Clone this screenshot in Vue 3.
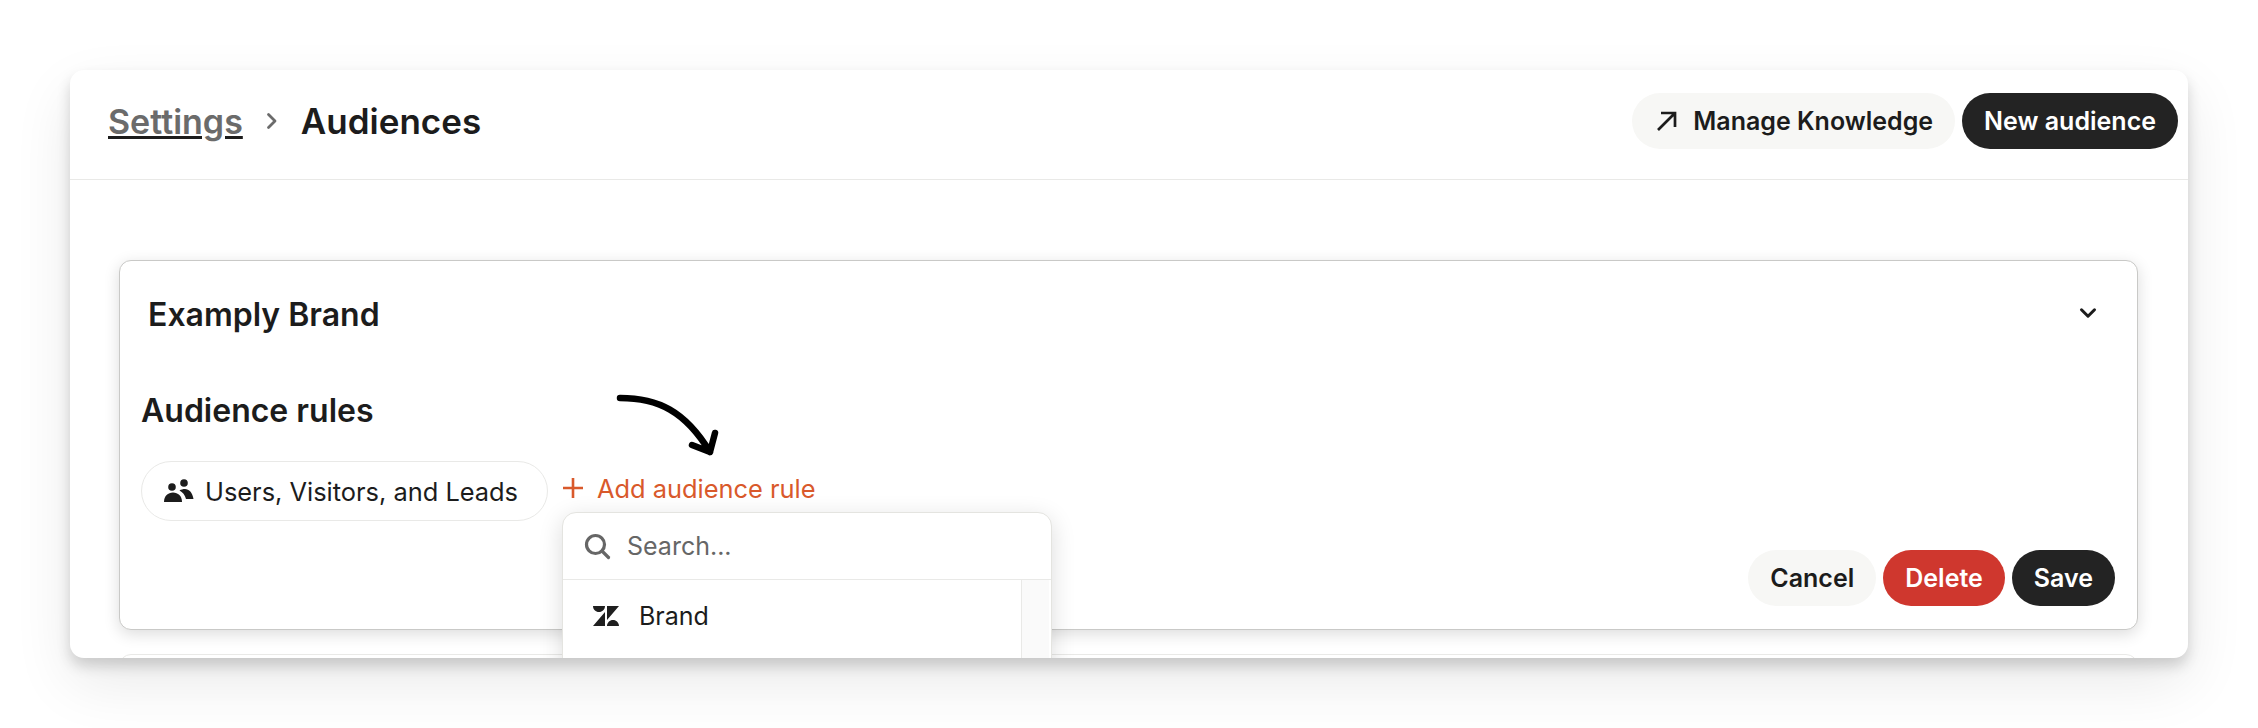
<template>
  <div class="stage">
    <div class="window">
      <header class="topbar">
        <nav class="crumbs">
          <a class="crumb-link">Settings</a>
          <svg class="crumb-sep" width="20" height="20" viewBox="0 0 20 20" fill="none">
            <path d="M6.500 3.500l6.500 6.500-6.500 6.500" stroke="#6b6b6b" stroke-width="2.800" stroke-linecap="round" stroke-linejoin="round" />
          </svg>
          <span class="crumb-current">Audiences</span>
        </nav>
        <div class="top-actions">
          <button class="btn btn-light">
            <svg width="24" height="24" viewBox="0 0 24 24" fill="none">
              <path d="M4 21L20 5M7 4h14v14" stroke="#1c1c1c" stroke-width="2.700" />
            </svg>
            Manage Knowledge
          </button>
          <button class="btn btn-dark">New audience</button>
        </div>
      </header>

      <main class="content">
        <section class="card">
          <div class="card-head">
            <h2 class="card-title">Examply Brand</h2>
            <svg class="card-chevron" width="26" height="26" viewBox="0 0 24 24" fill="none">
              <path d="M6 9l6 6 6-6" stroke="#1c1c1c" stroke-width="2.800" stroke-linecap="round" stroke-linejoin="round" />
            </svg>
          </div>

          <h3 class="rules-title">Audience rules</h3>
          <div class="rules-row">
            <div class="rule-pill">
              <svg width="30" height="24" viewBox="0 0 30 24" fill="#1c1c1c">
                <circle cx="8" cy="8" r="3.800" />
                <circle cx="20" cy="4" r="3.800" />
                <path d="M0 23C0 17 4 13.500 9 13.500S18 17 18 23z" />
                <path d="M15.500 11.500C17 10.500 19 10 21 10c4 0 7.500 3.500 8.500 10H22c-1-4-3.500-7-6.500-8.500z" />
              </svg>
              Users, Visitors, and Leads
            </div>
            <div class="add-rule">
              <svg width="24" height="24" viewBox="0 0 24 24" fill="none">
                <path d="M12 2v20M2 12h20" stroke="#d9592b" stroke-width="2.600" />
              </svg>
              Add audience rule
            </div>
          </div>

          <div class="card-actions">
            <button class="btn btn-light">Cancel</button>
            <button class="btn btn-red">Delete</button>
            <button class="btn btn-dark">Save</button>
          </div>

          <svg class="hand-arrow" width="110" height="70" viewBox="0 0 110 70" fill="none">
            <path d="M7 7C45 7 72 20 97 61M79 54l18 7 5-19" stroke="#000" stroke-width="6.500" stroke-linecap="round" stroke-linejoin="round" />
          </svg>

          <div class="rule-menu">
            <div class="menu-search">
              <svg width="28" height="28" viewBox="0 0 28 28" fill="none">
                <circle cx="12.500" cy="12.500" r="9" stroke="#666" stroke-width="3.200" />
                <path d="M19 19l6.500 6.500" stroke="#666" stroke-width="3.200" stroke-linecap="round" />
              </svg>
              <span>Search...</span>
            </div>
            <div class="menu-body">
              <div class="menu-list">
                <div class="menu-item">
                  <svg width="26" height="20" viewBox="0 0 26 20" fill="#1f1f1f">
                    <path d="M0 0h12c0 3.500-2.700 6-6 6S0 3.500 0 0zM0 20L12 6v14zM14 0h12L14 14zM14 20c0-3.300 2.700-6 6-6s6 2.700 6 6z" />
                  </svg>
                  Brand
                </div>
              </div>
              <div class="menu-scroll"></div>
            </div>
          </div>
        </section>

        <section class="card card-next"></section>
      </main>
    </div>
  </div>
</template>

<script setup>
</script>

<style>
html, body { margin: 0; background: #fff; }
</style>

<style scoped>
.stage {
  width: 2258px;
  height: 728px;
  padding: 70px;
  box-sizing: border-box;
  overflow: hidden;
  background: #fff;
  font-family: Inter, "Liberation Sans", sans-serif;
  color: #1c1c1c;
}
.window {
  height: 588px;
  background: #fff;
  border-radius: 14px;
  overflow: hidden;
  box-shadow: 0 8px 14px rgba(0, 0, 0, 0.16), 0 24px 60px rgba(0, 0, 0, 0.09);
}
.topbar {
  height: 110px;
  box-sizing: border-box;
  border-bottom: 1px solid #e9e9e7;
  display: flex;
  align-items: center;
  justify-content: space-between;
  padding: 0 10px 7px 38px;
}
.crumbs { display: flex; align-items: center; gap: 19px; font-size: 35px; font-weight: 600; }
.crumb-link { color: #6b6b6b; font-size: 34px; text-decoration: underline; text-decoration-color: #1c1c1c; }
.crumb-current { color: #1c1c1c; }
.top-actions { display: flex; gap: 7px; }
.btn {
  height: 56px;
  border: none;
  border-radius: 28px;
  padding: 0 22px;
  display: flex;
  align-items: center;
  gap: 15px;
  font-family: inherit;
  font-size: 25px;
  font-weight: 600;
}
.btn-light { background: #f7f7f5; color: #1c1c1c; }
.btn-dark { background: #232323; color: #fff; }
.btn-red { background: #cf372e; color: #fff; }
.content { padding: 80px 50px 0 49px; }
.card {
  position: relative;
  height: 370px;
  box-sizing: border-box;
  border: 1px solid #c9c9c7;
  border-radius: 12px;
  background: #fff;
  box-shadow: 0 4px 16px rgba(0, 0, 0, 0.14);
  padding: 0 21px;
}
.card-next {
  margin-top: 24px;
  border-color: #e9e9e7;
  box-shadow: none;
}
.card-head {
  height: 106px;
  display: flex;
  align-items: center;
  justify-content: space-between;
  padding: 0 15px 0 7px;
}
.card-chevron { margin-bottom: 3px; }
.card-title { margin: 0; font-size: 32px; font-weight: 600; }
.rules-title { margin: 22px 0 0; font-size: 32px; font-weight: 600; line-height: 44px; }
.rules-row { display: flex; align-items: flex-start; gap: 13px; margin-top: 28px; }
.rule-pill {
  height: 60px;
  box-sizing: border-box;
  border: 1px solid #e9e9e7;
  border-radius: 30px;
  padding: 0 29px 0 22px;
  display: flex;
  align-items: center;
  gap: 11px;
  font-size: 25.400px;
  font-weight: 400;
}
.add-rule {
  display: flex;
  align-items: center;
  gap: 12px;
  height: 54px;
  font-size: 25.400px;
  color: #d9592b;
}
.card-actions {
  position: absolute;
  right: 22px;
  bottom: 23px;
  display: flex;
  gap: 7px;
}
.hand-arrow { position: absolute; left: 493px; top: 130px; }
.rule-menu {
  position: absolute;
  left: 442px;
  top: 251px;
  width: 490px;
  height: 300px;
  box-sizing: border-box;
  border: 1px solid #e4e4e0;
  border-radius: 14px;
  background: #fff;
  box-shadow: 0 6px 24px rgba(0, 0, 0, 0.14);
  z-index: 2;
  overflow: hidden;
}
.menu-search {
  height: 67px;
  box-sizing: border-box;
  border-bottom: 1px solid #e9e9e7;
  display: flex;
  align-items: center;
  gap: 16px;
  padding: 0 20px;
  font-size: 25px;
  color: #666;
}
.menu-body { display: flex; height: 100%; }
.menu-list { flex: 1; }
.menu-item {
  display: flex;
  align-items: center;
  gap: 20px;
  height: 72px;
  padding: 0 29px 0 30px;
  font-size: 25px;
}
.menu-scroll {
  width: 27px;
  margin-right: 2px;
  background: #fafafa;
  border-left: 1px solid #e9e9e7;
}
</style>
